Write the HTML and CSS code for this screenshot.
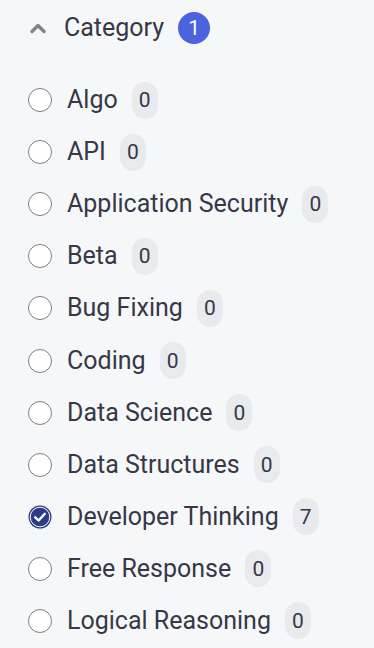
FILE: index.html
```html
<!DOCTYPE html>
<html>
<head>
<meta charset="utf-8">
<link rel="stylesheet" href="styles.css">
</head>
<body>
<div class="panel">
  <div class="header">
    <svg class="chevron" width="18" height="12" viewBox="0 0 18 12"><path d="M3 9.5 L9 3.5 L15 9.5" fill="none" stroke="#7c8489" stroke-width="3.4" stroke-linecap="round" stroke-linejoin="round"/></svg>
    <span class="title">Category</span>
    <span class="badge">1</span>
  </div>
  <ul class="list">
    <li class="row"><span class="radio"></span><span class="label">Algo</span><span class="count">0</span></li>
    <li class="row"><span class="radio"></span><span class="label">API</span><span class="count">0</span></li>
    <li class="row"><span class="radio"></span><span class="label">Application Security</span><span class="count">0</span></li>
    <li class="row"><span class="radio"></span><span class="label">Beta</span><span class="count">0</span></li>
    <li class="row"><span class="radio"></span><span class="label">Bug Fixing</span><span class="count">0</span></li>
    <li class="row"><span class="radio"></span><span class="label">Coding</span><span class="count">0</span></li>
    <li class="row"><span class="radio"></span><span class="label">Data Science</span><span class="count">0</span></li>
    <li class="row"><span class="radio"></span><span class="label">Data Structures</span><span class="count">0</span></li>
    <li class="row"><span class="radio checked"><svg width="24" height="24" viewBox="0 0 24 24"><circle cx="12" cy="12" r="11.5" fill="#2f3b86"/><circle cx="12" cy="12" r="9.8" fill="none" stroke="#fff" stroke-width="1"/><path d="M7.2 12.3 L10.6 15.5 L16.8 8.8" fill="none" stroke="#fff" stroke-width="2.4" stroke-linecap="round" stroke-linejoin="round"/></svg></span><span class="label">Developer Thinking</span><span class="count">7</span></li>
    <li class="row"><span class="radio"></span><span class="label">Free Response</span><span class="count">0</span></li>
    <li class="row"><span class="radio"></span><span class="label">Logical Reasoning</span><span class="count">0</span></li>
  </ul>
</div>
</body>
</html>
```
FILE: styles.css
```css
html, body {
  margin: 0;
  padding: 0;
  background: #f6f7f9;
}
body {
  font-family: Roboto, "Liberation Sans", sans-serif;
  color: #363847;
}
.panel {
  padding: 11px 0 0 0;
}
.header {
  display: flex;
  align-items: center;
  height: 34px;
  padding-left: 29px;
}
.chevron {
  display: block;
  margin-right: 17px;
}
.title {
  font-size: 25px;
  line-height: 34px;
}
.badge {
  margin-left: 14px;
  width: 32px;
  height: 32px;
  border-radius: 50%;
  background: #4c63df;
  color: #fff;
  font-size: 21px;
  display: flex;
  align-items: center;
  justify-content: center;
}
.list {
  list-style: none;
  margin: 29px 0 0 0;
  padding: 0;
}
.row {
  display: flex;
  align-items: center;
  height: 52.1px;
  padding-left: 28px;
}
.radio {
  width: 24px;
  height: 24px;
  box-sizing: border-box;
  border: 1.5px solid #7a7f86;
  border-radius: 50%;
  background: #fff;
  flex: none;
}
.radio.checked {
  border: none;
  background: none;
}
.radio svg {
  display: block;
}
.label {
  margin-left: 15px;
  font-size: 25px;
  line-height: 30px;
}
.count {
  margin-left: 14px;
  min-width: 26px;
  height: 37px;
  box-sizing: border-box;
  padding: 0 7px;
  border-radius: 13px;
  background: #e8eaee;
  font-size: 21px;
  display: flex;
  align-items: center;
  justify-content: center;
}
```
